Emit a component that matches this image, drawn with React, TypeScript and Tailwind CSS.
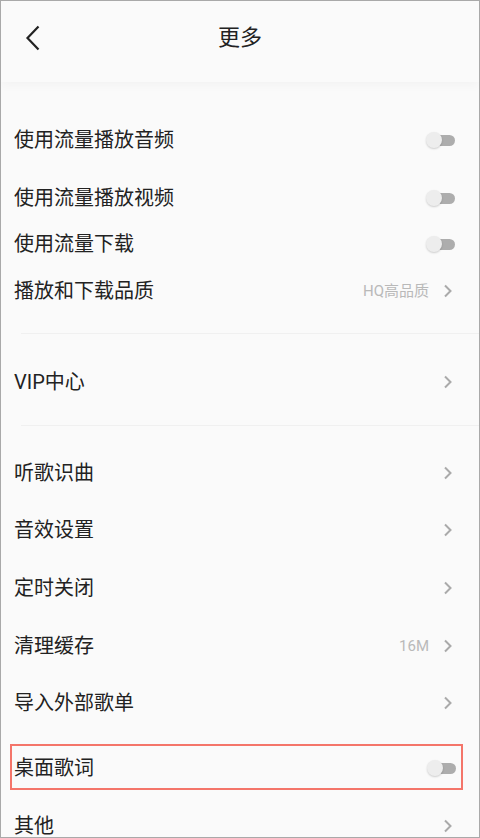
import React from "react";

type Row = {
  label: string;
  kind: "toggle" | "link";
  value?: string;
  mt: string;
};

function Toggle() {
  return (
    <div className="relative h-[18px] w-[29px]">
      <div className="absolute right-0 top-[4px] h-[11px] w-[22px] rounded-full bg-[#adadad]" />
      <div className="absolute left-0 top-[1px] h-4 w-4 rounded-full bg-[#ededed] shadow-[0_1px_2px_rgba(0,0,0,0.18)]" />
    </div>
  );
}

function Chevron() {
  return (
    <svg width="10" height="16" viewBox="0 0 10 16" fill="none">
      <path d="M2 2.5 L7.5 8 L2 13.5" stroke="#aaaaaa" strokeWidth="2" />
    </svg>
  );
}

function SettingRow({ row }: { row: Row }) {
  return (
    <div className={`flex h-[46px] items-center justify-between pl-[13px] pr-[24px] pt-[2px] ${row.mt}`}>
      <span className="text-[20px] text-[#222]">{row.label}</span>
      {row.kind === "toggle" ? (
        <Toggle />
      ) : (
        <div className="flex items-center gap-[14px] pr-[2px]">
          {row.value && <span className="text-[15px] text-[#b9b9b9]">{row.value}</span>}
          <Chevron />
        </div>
      )}
    </div>
  );
}

const group1: Row[] = [
  { label: "使用流量播放音频", kind: "toggle", mt: "mt-[34px]" },
  { label: "使用流量播放视频", kind: "toggle", mt: "mt-[12px]" },
  { label: "使用流量下载", kind: "toggle", mt: "mt-0" },
  { label: "播放和下载品质", kind: "link", value: "HQ高品质", mt: "mt-[1px]" },
];

const group3: Row[] = [
  { label: "听歌识曲", kind: "link", mt: "mt-[23px]" },
  { label: "音效设置", kind: "link", mt: "mt-[11px]" },
  { label: "定时关闭", kind: "link", mt: "mt-[12px]" },
  { label: "清理缓存", kind: "link", value: "16M", mt: "mt-[12px]" },
  { label: "导入外部歌单", kind: "link", mt: "mt-[11px]" },
];

export default function App() {
  return (
    <div
      className="h-[838px] w-[480px] overflow-hidden border border-[#a9a9a9] bg-[#fafafa]"
      style={{ fontFamily: 'Roboto, "Noto Sans CJK SC", sans-serif' }}
    >
      {/* Header */}
      <div className="relative flex h-[81px] items-center justify-center bg-[#fafafa] shadow-[0_3px_10px_rgba(0,0,0,0.035)]">
        <svg
          className="absolute left-[24px] top-[24px]"
          width="16"
          height="26"
          viewBox="0 0 16 26"
          fill="none"
        >
          <path d="M13.5 1.5 L2.5 13 L13.5 24.5" stroke="#222" strokeWidth="2.2" />
        </svg>
        <h1 className="-mt-[8px] text-[22px] text-[#222]">更多</h1>
      </div>

      {group1.map((r) => (
        <SettingRow key={r.label} row={r} />
      ))}

      <div className="ml-[20px] mt-[20px] h-px bg-[#f0f0f0]" />

      <SettingRow row={{ label: "VIP中心", kind: "link", mt: "mt-[24px]" }} />

      <div className="ml-[20px] mt-[21px] h-px bg-[#f0f0f0]" />

      {group3.map((r) => (
        <SettingRow key={r.label} row={r} />
      ))}

      {/* highlighted row */}
      <div className="ml-[9px] mr-[16px] mt-[19px] flex h-[46px] items-center justify-between border-2 border-[#f4756a] pl-[2px] pr-[5px] pt-[2px]">
        <span className="text-[20px] text-[#222]">桌面歌词</span>
        <Toggle />
      </div>

      <SettingRow row={{ label: "其他", kind: "link", mt: "mt-[12px]" }} />
    </div>
  );
}
